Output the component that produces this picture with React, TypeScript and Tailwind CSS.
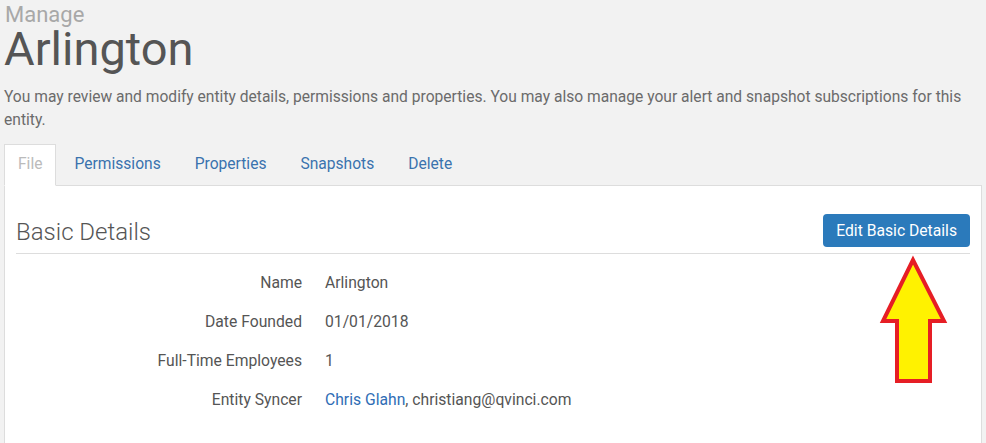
import React from "react";

const rows: { label: string; value: React.ReactNode }[] = [
  { label: "Name", value: "Arlington" },
  { label: "Date Founded", value: "01/01/2018" },
  { label: "Full-Time Employees", value: "1" },
  {
    label: "Entity Syncer",
    value: (
      <>
        <span className="text-[#2f6db5]">Chris Glahn</span>, christiang@qvinci.com
      </>
    ),
  },
];

export default function App() {
  return (
    <div
      className="relative min-h-[443px] bg-[#f2f2f2] px-[4px] overflow-hidden"
      style={{ fontFamily: "Roboto, 'Liberation Sans', sans-serif" }}
    >
      <div className="pt-[3px] pl-[1px] text-[22px] leading-[24px] text-[#a8a8a8]">Manage</div>
      <h1 className="-mt-[3px] text-[47px] leading-[50px] text-[#555555] font-normal">Arlington</h1>
      <p className="mt-[12px] text-[15.6px] leading-[23px] text-[#6b6b6b] pr-[10px]">
        You may review and modify entity details, permissions and properties. You may also manage your alert and snapshot subscriptions for this entity.
      </p>
      <div className="mt-[12px] flex text-[15.6px] leading-[19px]">
        <div className="px-[13px] py-[10px] mr-[2px] bg-white border border-[#dddddd] border-b-white text-[#bbbbbb] relative z-10 -mb-[1px]">
          File
        </div>
        {["Permissions", "Properties", "Snapshots", "Delete"].map((t) => (
          <div key={t} className="px-[15px] py-[10px] mr-[2px] border border-transparent text-[#3a73ae]">
            {t}
          </div>
        ))}
      </div>
      <div className="bg-white border border-[#dddddd] px-[11px] pt-[28px] min-h-[300px]">
        <div className="flex items-center justify-between border-b border-[#dddddd] pb-[6px]">
          <h2 className="text-[24px] leading-[30px] font-light text-[#555555] pt-[2px]">Basic Details</h2>
          <button className="h-[33px] px-[13px] rounded-[4px] bg-[#2b7abb] text-white text-[15.7px] leading-[20px]">
            Edit Basic Details
          </button>
        </div>
        <div className="mt-[9px] text-[15.7px] text-[#555555]">
          {rows.map((r) => (
            <div key={r.label} className="flex h-[39px] items-center">
              <div className="w-[286px] text-right">{r.label}</div>
              <div className="ml-[23px]">{r.value}</div>
            </div>
          ))}
        </div>
      </div>
      <svg className="absolute left-0 top-0 pointer-events-none" width="986" height="443" viewBox="0 0 986 443">
        <polygon
          points="913,260 883,321 897,321 897,381 930,381 930,321 944,321"
          fill="#fff200"
          stroke="#e61e25"
          strokeWidth="4"
          strokeLinejoin="miter"
        />
      </svg>
    </div>
  );
}
